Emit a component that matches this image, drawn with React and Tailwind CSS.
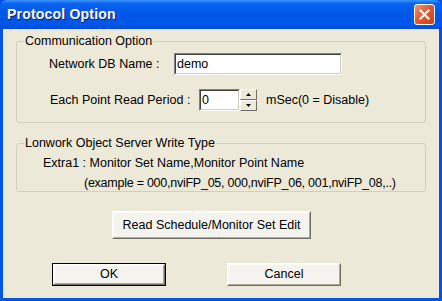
import { useState } from 'react';

const font = "font-['Liberation_Sans',Arial,sans-serif]";

function XpButton({ label, isDefault, className }) {
  return (
    <button
      className={`${className} ${isDefault ? 'border border-black' : ''} bg-[#f4f3ee] text-[12.5px] text-black`}
    >
      <div className="h-full w-full border border-t-white border-l-white border-r-[#716f64] border-b-[#716f64]">
        <div className="h-full w-full flex items-center justify-center border border-t-[#fbfbf8] border-l-[#fbfbf8] border-r-[#aca899] border-b-[#aca899]">
          {label}
        </div>
      </div>
    </button>
  );
}

function Sunken({ className, children }) {
  return (
    <div className={`${className} border border-t-[#808080] border-l-[#808080] border-r-white border-b-white`}>
      <div className="h-full w-full bg-white border border-t-[#404040] border-l-[#404040] border-r-[#d4d0c8] border-b-[#d4d0c8]">
        {children}
      </div>
    </div>
  );
}

function SpinArrow({ up }) {
  return (
    <div className="flex-1 bg-[#ece9d8] border border-t-white border-l-white border-r-[#716f64] border-b-[#716f64] flex items-center justify-center">
      <svg width="5" height="3" viewBox="0 0 5 3">
        {up ? <path d="M2.5 0L5 3H0z" fill="#000" /> : <path d="M0 0h5L2.5 3z" fill="#000" />}
      </svg>
    </div>
  );
}

export default function App() {
  const [dbName, setDbName] = useState('demo');
  const [period, setPeriod] = useState('0');

  return (
    <div className={`w-[442px] h-[301px] flex flex-col bg-[#0054e3] ${font}`}>
      {/* title bar */}
      <div className="h-[29px] shrink-0 flex items-center justify-between pl-[7px] pr-[7px] rounded-t-[7px] bg-[linear-gradient(to_bottom,#3d95ff_0%,#0a64f0_12%,#0056e6_50%,#0058e8_85%,#0648d4_100%)]">
        <span className="text-white font-bold text-[14px] tracking-[0.2px] [text-shadow:1px_1px_0_#0a1e7a]">Protocol Option</span>
        <div className="w-[21px] h-[21px] rounded-[3px] border border-white bg-[linear-gradient(135deg,#f0967a_0%,#e35a32_45%,#c8411b_100%)] flex items-center justify-center">
          <svg width="11" height="11" viewBox="0 0 11 11">
            <path d="M1.5 1.5L9.5 9.5M9.5 1.5L1.5 9.5" stroke="#fff" strokeWidth="2.2" strokeLinecap="square" />
          </svg>
        </div>
      </div>

      {/* body */}
      <div className="flex-1 mx-[3px] mb-[3px] bg-[#ece9d8] text-[12.5px] text-black flex flex-col pt-[5px]">
        <fieldset className="ml-[13px] w-[410px] h-[89px] border border-[#d0d0bf] rounded-[3px]">
          <legend className="ml-[7px] px-[1px] leading-[14px]">Communication Option</legend>
          <div className="flex items-center pl-[32px] mt-[5px]">
            <span className="w-[125px]">Network DB Name :</span>
            <Sunken className="w-[168px] h-[22px]">
              <input
                value={dbName}
                onChange={(e) => setDbName(e.target.value)}
                className="w-full h-full px-[1px] text-[12.5px] outline-none leading-[16px] -mt-[2px]"
              />
            </Sunken>
          </div>
          <div className="flex items-center pl-[33px] mt-[14px]">
            <span className="w-[149px]">Each Point Read Period :</span>
            <Sunken className="w-[41px] h-[22px]">
              <input
                value={period}
                onChange={(e) => setPeriod(e.target.value)}
                className="w-full h-full px-[1px] text-[12.5px] outline-none leading-[16px] -mt-[3px]"
              />
            </Sunken>
            <div className="w-[17px] h-[22px] flex flex-col">
              <SpinArrow up />
              <SpinArrow />
            </div>
            <span className="ml-[9px]">mSec(0 = Disable)</span>
          </div>
        </fieldset>

        <fieldset className="ml-[13px] mt-[13px] w-[410px] h-[56px] border border-[#d0d0bf] rounded-[3px]">
          <legend className="ml-[7px] px-[1px] leading-[14px]">Lonwork Object Server Write Type</legend>
          <div className="pl-[26px] mt-[6px] leading-[14px]">Extra1 : Monitor Set Name,Monitor Point Name</div>
          <div className="pl-[67px] mt-[6px] leading-[14px] tracking-[-0.25px]">(example = 000,nviFP_05, 000,nviFP_06, 001,nviFP_08,..)</div>
        </fieldset>

        <XpButton label="Read Schedule/Monitor Set Edit" className="ml-[109px] mt-[19px] w-[199px] h-[28px]" />

        <div className="flex mt-[24px]">
          <XpButton label="OK" isDefault className="ml-[49px] w-[114px] h-[23px]" />
          <XpButton label="Cancel" className="ml-[61px] w-[114px] h-[23px]" />
        </div>
      </div>
    </div>
  );
}
